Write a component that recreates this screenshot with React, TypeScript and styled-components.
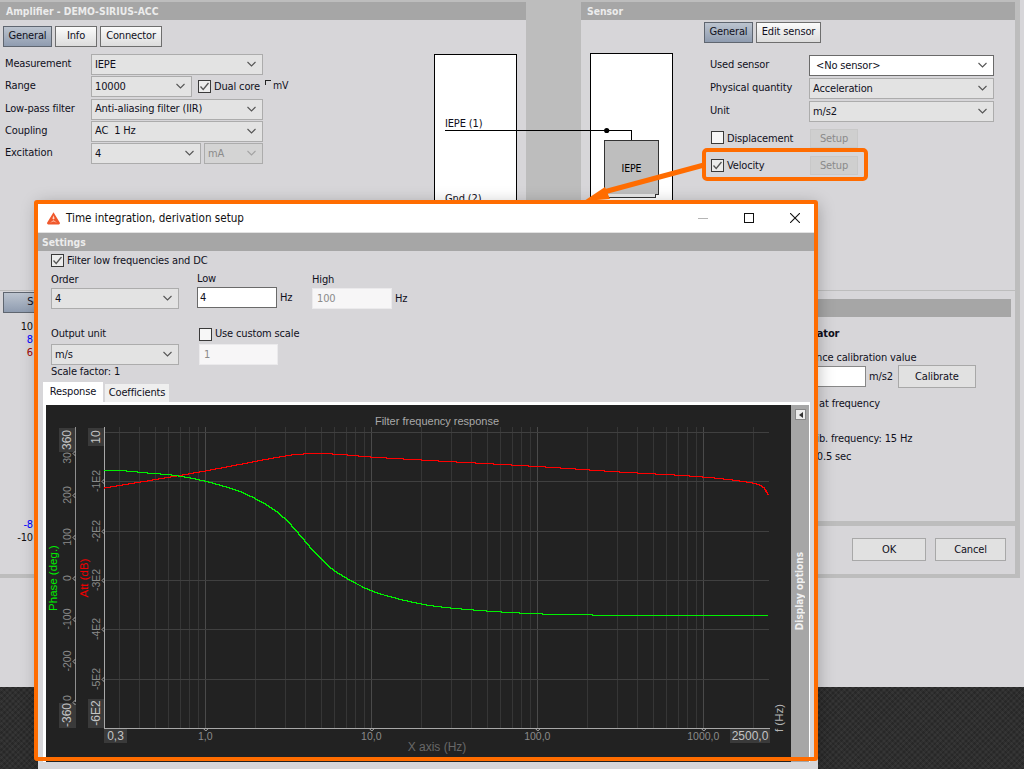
import React from "react";
import styled, { createGlobalStyle } from "styled-components";

const Global = createGlobalStyle`
  html, body { margin: 0; padding: 0; background: #d7d6d9; overflow: hidden; }
  * { box-sizing: border-box; }
`;

const UI = `"DejaVu Sans Condensed", "DejaVu Sans", sans-serif`;
const ORANGE = "#ff6c00";
const PANEL = "#d7d6d9";

const Page = styled.div`
  position: relative; width: 1024px; height: 769px; overflow: hidden;
  background: ${PANEL}; font: 11px ${UI}; letter-spacing: -0.15px; color: #10101c;
`;
const ParentWindow = styled.div`
  width: 1020px; height: 578px; padding-top: 2px; background: #bdbdbd; isolation: isolate;
  display: flex; flex-direction: column; gap: 1px; position: relative;
`;
const TopRow = styled.div`display: flex; height: 288px; gap: 55px;`;
const Panel = styled.section<{ $w: number }>`
  width: ${(p) => p.$w}px; background: ${PANEL}; display: flex; flex-direction: column;
`;
const PanelHeader = styled.div`
  height: 18px; background: #a6a6a6; color: #ececec; font-weight: 700; font-size: 10.3px; letter-spacing: 0;
  line-height: 18px; padding-left: 6px; flex: none;
`;
const PanelBody = styled.div`display: flex; flex: 1; min-height: 0;`;
const FormColumn = styled.div<{ $w: number; $pad: number }>`
  width: ${(p) => p.$w}px; padding-left: ${(p) => p.$pad}px; flex: none;
`;
const TabBar = styled.div<{ $top: number }>`
  display: flex; gap: 3px; margin-top: ${(p) => p.$top}px; height: 21px;
`;
const Button = styled.div<{ $w: number; $active?: boolean }>`
  width: ${(p) => p.$w}px; height: 21px; display: flex; align-items: center; justify-content: center;
  border: 1px solid ${(p) => (p.$active ? "#5f6670" : "#6e6e6e")};
  background: ${(p) => (p.$active ? "linear-gradient(#bcc4cf, #8f9cb0)" : "linear-gradient(#fbfbfb, #dcdcdc)")};
  padding-bottom: 3px; flex: none;
`;
const Rows = styled.div<{ $top: number; $gap: number }>`
  margin-top: ${(p) => p.$top}px; display: flex; flex-direction: column; gap: ${(p) => p.$gap}px;
`;
const Row = styled.div`display: flex; align-items: center; height: 21px;`;
const RowLabel = styled.span<{ $w: number; $pad?: number }>`
  width: ${(p) => p.$w}px; flex: none; padding-bottom: 2px; padding-left: ${(p) => p.$pad ?? 0}px;
`;
const SelectBox = styled.div<{ $w: number; $white?: boolean; $off?: boolean }>`
  width: ${(p) => p.$w}px; height: 21px; flex: none; display: flex; align-items: center;
  justify-content: space-between; padding: 0 6px 1px ${(p) => (p.$white ? 6 : 3)}px;
  border: 1px solid ${(p) => (p.$white ? "#6a6a6a" : "#acacac")};
  background: ${(p) => (p.$white ? "#fff" : p.$off ? "#d4d4d4" : "#e3e3e3")};
  color: ${(p) => (p.$off ? "#8b8b8b" : "inherit")};
  white-space: pre;
`;
const Chevron = ({ off }: { off?: boolean }) => (
  <svg width="9" height="6" viewBox="0 0 9 6" fill="none" stroke={off ? "#a3a3a3" : "#555"} strokeWidth="1.1">
    <path d="M.5 1 L4.5 5 L8.5 1" />
  </svg>
);
const Select = ({ value, w, white, off }: { value: string; w: number; white?: boolean; off?: boolean }) => (
  <SelectBox $w={w} $white={white} $off={off}>
    <span>{value}</span>
    <Chevron off={off} />
  </SelectBox>
);
const CheckBox = styled.span<{ $on?: boolean }>`
  width: 13px; height: 13px; border: 1px solid #3a3a3a; flex: none; display: inline-flex;
  align-items: center; justify-content: center; background: ${(p) => (p.$on ? "#ececec" : "#f7f7f7")};
`;
const Check = ({ on }: { on?: boolean }) => (
  <CheckBox $on={on}>
    {on && (
      <svg width="11" height="11" viewBox="0 0 11 11" fill="none" stroke="#555" strokeWidth="1.3">
        <path d="M1.5 5.5 L4.2 8.5 L9.5 2" />
      </svg>
    )}
  </CheckBox>
);
const CheckLabel = styled.label`
  display: inline-flex; align-items: center; gap: 3px; white-space: nowrap;
`;
const DualCore = styled.div`margin-left: 6px; display: flex; align-items: center;`;
const UnitMark = styled.span`
  margin-left: 5px; display: inline-flex; gap: 2px; align-items: flex-start; padding-bottom: 3px; font-size: 10.5px;
  &::before { content: ""; width: 5px; height: 4px; border: 1px solid #222; border-right: 0; border-bottom: 0; margin-top: 1px; }
`;
const SchematicBox = styled.div<{ $left: number; $top: number }>`
  width: 83px; height: 260px; margin-left: ${(p) => p.$left}px; margin-top: ${(p) => p.$top}px;
  background: #fff; border: 1px solid #000; flex: none; position: relative;
`;
const PortLabel = styled.div<{ $top: number }>`
  padding-left: 10px; margin-top: ${(p) => p.$top}px; height: 14px; line-height: 14px; white-space: nowrap;
`;
const SensorCard = styled.div`
  width: 55px; height: 55px; margin: 86px 0 0 13px; background: #bebebe; border: 1px solid #333;
  color: #000; font-size: 10.5px; display: flex; align-items: center; justify-content: center;
  position: relative; z-index: 1;
  &::after {
    content: ""; position: absolute; left: 2px; right: 2px; bottom: -4px; height: 3px; background: #e8e8e8;
    border: 1px solid #333; border-top: 0;
  }
`;
const Wire = styled.svg`position: absolute; left: 0; top: 0; width: 700px; height: 150px; pointer-events: none; z-index: 2;`;
const SensorForm = styled.div`margin-left: 31px;`;
const SensorRows = styled.div`margin: 12px 0 0 6px;`;
const OptionRows = styled.div`margin-top: 7px; display: flex; flex-direction: column; gap: 8px;`;
const OptionRow = styled.div`display: flex; align-items: center; height: 19px;`;
const OptionCheck = styled.div`width: 100px; padding: 1px 0 0 1px; flex: none; & > label > span:last-child { padding-top: 1px; }`;
const SetupButton = styled.div`
  width: 48px; height: 19px; background: #cfcfcf; color: #8a8a8a; border: 1px solid #c8c8c8;
  display: flex; align-items: center; justify-content: center; padding-bottom: 1px;
`;
const BottomRow = styled.div`display: flex; height: 283px; padding-right: 5px;`;
const ScopePanel = styled.section`
  width: 640px; background: ${PANEL}; padding: 1px 0 0 3px; flex: none;
`;
const YScale = styled.div`
  width: 30px; margin-top: 7px; height: 225px; display: flex; flex-direction: column; text-align: right; font-size: 11px; line-height: 13px;
`;
const ScaleTick = styled.span<{ $c: string; $gap?: number }>`
  color: ${(p) => p.$c}; margin-top: ${(p) => p.$gap ?? 0}px;
`;
const RightStack = styled.div`
  flex: none; width: 375px; display: flex; flex-direction: column; gap: 5px; background: #bdbdbd;
`;
const CalibPanel = styled.section`
  height: 230px; background: ${PANEL}; padding: 8px 4px 0 0;
`;
const CalibHeader = styled.div`height: 18px; background: #a6a6a6;`;
const CalibBody = styled.div`padding-left: 145px; display: flex; flex-direction: column;`;
const BoldLine = styled.div`font-weight: 700; margin-top: 10px; height: 14px; line-height: 14px;`;
const CalibLine = styled.div<{ $top: number; $indent?: number }>`
  margin-top: ${(p) => p.$top}px; padding-left: ${(p) => p.$indent ?? 0}px; height: 14px; line-height: 14px; white-space: nowrap;
`;
const CalibInputRow = styled.div`display: flex; align-items: center; height: 23px; margin-top: 0;`;
const NumberInput = styled.div<{ $w: number; $dark?: boolean; $off?: boolean }>`
  width: ${(p) => p.$w}px; height: 21px; flex: none; display: flex; align-items: center;
  background: ${(p) => (p.$off ? "#f7f6f7" : "#fff")};
  border: 1px solid ${(p) => (p.$dark ? "#6a6a6a" : p.$off ? "#ebeaec" : "#888")};
  color: ${(p) => (p.$off ? "#8b8b8b" : "inherit")}; padding-left: ${(p) => (p.$off ? 4 : 2)}px;
`;
const UnitText = styled.span`margin-left: 3px;`;
const PlainButton = styled.div<{ $w: number }>`
  width: ${(p) => p.$w}px; height: 23px; background: #e1e1e1; border: 1px solid #a8a8a8;
  display: flex; align-items: center; justify-content: center; flex: none;
`;
const CalibGap = styled.span`width: 5px; flex: none;`;
const ButtonBar = styled.section`
  height: 48px; background: ${PANEL}; display: flex; justify-content: flex-end; gap: 9px; padding: 12px 9px 0 0;
`;
const Carbon = styled.div`
  margin-top: 109px; height: 82px;
  background-color: #2f2f2f;
  background-image:
    repeating-linear-gradient(45deg, rgba(255,255,255,.03) 0 2px, transparent 2px 4px),
    repeating-linear-gradient(-45deg, rgba(0,0,0,.16) 0 2px, transparent 2px 4px);
`;
const Dialog = styled.div`
  position: absolute; left: 38px; top: 204px; width: 780px; height: 565px; background: ${PANEL};
  box-shadow: 0 0 16px rgba(0,0,0,.28); display: flex; flex-direction: column; padding-right: 4px;
`;
const DialogFrame = styled.div`
  position: absolute; left: 34px; top: 200px; width: 784px; height: 561px;
  border: 4px solid ${ORANGE}; border-radius: 3px; pointer-events: none;
`;
const TitleBar = styled.div`
  height: 29px; background: #fff; display: flex; align-items: center; padding: 0 14px 0 9px; flex: none;
  border-bottom: 1px solid #e2e2e2; color: #111; font-size: 11.6px; letter-spacing: 0;
`;
const TitleText = styled.span`margin-left: 6px; flex: 1; padding-bottom: 1px;`;
const WinControls = styled.div`display: flex; gap: 36px; align-items: center;`;
const SettingsHeader = styled.div`
  height: 18px; background: #a6a6a6; color: #ececec; font-weight: 700; font-size: 10.3px; letter-spacing: 0;
  line-height: 18px; padding-left: 4px; flex: none;
`;
const SettingsBody = styled.div`padding: 3px 0 0 13px; height: 131px; flex: none;`;
const FilterRow = styled.div`height: 14px;`;
const FieldsRow = styled.div<{ $top: number }>`display: flex; margin-top: ${(p) => p.$top}px;`;
const FieldCol = styled.div<{ $w: number; $shift?: number }>`
  width: ${(p) => p.$w}px; flex: none; margin-top: ${(p) => p.$shift ?? 0}px;
`;
const FieldLabel = styled.div<{ $h: number }>`height: ${(p) => p.$h}px; line-height: 16px;`;
const InlineField = styled.div`display: flex; align-items: center;`;
const ScaleFactor = styled.div`height: 14px; line-height: 14px; margin-top: 0;`;
const TabStrip = styled.div`display: flex; align-items: flex-end; height: 20px; padding-left: 5px; gap: 2px; flex: none;`;
const PageTab = styled.div<{ $w: number; $active?: boolean }>`
  width: ${(p) => p.$w}px; height: ${(p) => (p.$active ? 20 : 18)}px;
  background: ${(p) => (p.$active ? "#fff" : "#efefef")};
  display: flex; align-items: center; justify-content: center; padding-bottom: 1px;
`;
const TabPane = styled.div`
  margin-left: 5px; width: 767px; flex: none; border-top: 3px solid #fff; border-left: 3px solid #fff; border-right: 1px solid #fff;
  background: #222; display: flex; height: 360px;
`;
const ChartSvg = styled.svg`display: block; width: 745px; height: 357px; flex: none; background: #222; letter-spacing: 0;`;
const SideStrip = styled.div`
  width: 18px; flex: none; background: #a6a6a6; position: relative; display: flex; flex-direction: column; align-items: center;
`;
const CollapseButton = styled.div`
  position: absolute; top: 4px; left: 4px; width: 11px; height: 11px; background: #ededed; border: 1px solid #888;
  display: flex; align-items: center; justify-content: center;
  &::before { content: ""; border: 3px solid transparent; border-right: 4px solid #333; border-left: 0; }
`;
const StripText = styled.span`
  position: absolute; top: 147px; left: 3px; writing-mode: vertical-rl; transform: rotate(180deg);
  color: #f0f0f0; font-weight: 700; font-size: 10px; letter-spacing: 0; white-space: nowrap;
`;
const Annotation = styled.div`
  position: absolute; left: 702px; top: 148px; width: 166px; height: 33px; border: 4px solid ${ORANGE}; border-radius: 5px; pointer-events: none;
`;
const ArrowLayer = styled.svg`position: absolute; left: 570px; top: 150px; width: 150px; height: 60px; pointer-events: none;`;

const xf = (f: number) => 205.3 + 166 * Math.log10(f);
const curve = (pts: number[][]) => {
  const slope = (i: number) => {
    const a = pts[Math.max(i - 1, 0)], b = pts[Math.min(i + 1, pts.length - 1)];
    return (b[1] - a[1]) / (b[0] - a[0]);
  };
  const out: string[] = [];
  for (let i = 0; i < pts.length - 1; i++) {
    const [x0, y0] = pts[i], [x1, y1] = pts[i + 1];
    const h = x1 - x0, m0 = slope(i) * h, m1 = slope(i + 1) * h;
    const n = Math.max(1, Math.round(h));
    for (let s = 0; s < n; s++) {
      const t = s / n, t2 = t * t, t3 = t2 * t;
      const y = (2 * t3 - 3 * t2 + 1) * y0 + (t3 - 2 * t2 + t) * m0 + (-2 * t3 + 3 * t2) * y1 + (t3 - t2) * m1;
      out.push(`${(x0 + h * t).toFixed(1)},${Math.round(y) + 0.5}`);
    }
  }
  const l = pts[pts.length - 1];
  out.push(`${l[0]},${l[1]}`);
  return out.join(" ");
};
const RED = [[104, 487.5], [150, 480], [205, 470.5], [250, 462], [285, 455.5], [303, 453.5], [333, 453.5], [371, 456.5], [430, 460], [537, 466], [620, 471.5], [703, 476.5], [753, 482.5], [763, 486.5], [766.7, 491.5], [768.5, 495.5]];
const GREEN = [[104, 469.5], [120, 470], [150, 472.7], [175, 475], [205, 480.7], [236.7, 490], [253, 497], [270, 506.5], [283, 516.5], [296.7, 531], [313, 550], [330, 566.7], [346.7, 578], [371.3, 590], [396.7, 598], [430, 605], [480, 610], [537, 613.3], [580, 614.3], [640, 615], [768, 615.5]];
const H_GRID = [432.5, 481.5, 531.5, 580.5, 629.5, 679.5];
const V_GRID = [0.3, 0.4, 0.5, 0.6, 0.7, 0.8, 0.9, 1, 2, 3, 4, 5, 6, 7, 8, 9, 10, 20, 30, 40, 50, 60, 70, 80, 90, 100, 200, 300, 400, 500, 600, 700, 800, 900, 1000, 2000];
const PHASE = [["200", 495], ["100", 537], ["0", 578], ["-100", 619], ["-200", 661]] as [string, number][];
const ATT = [["-1E2", 481], ["-2E2", 531], ["-3E2", 580], ["-4E2", 629], ["-5E2", 679]] as [string, number][];
const XT = [["1,0", 1], ["10,0", 10], ["100,0", 100], ["1000,0", 1000]] as [string, number][];

const Vert = ({ x, y, fill, size = 11, children }: { x: number; y: number; fill: string; size?: number; children: string }) => (
  <text x={x} y={y} fill={fill} fontSize={size} textAnchor="middle" dominantBaseline="central" transform={`rotate(-90 ${x} ${y})`}>{children}</text>
);

const Chart = () => (
  <ChartSvg viewBox="46 405 745 357" fontFamily={'"Liberation Sans", Arial, sans-serif'}>
    <g shapeRendering="crispEdges" fill="none">
      {V_GRID.map((f) => {
        const major = [1, 10, 100, 1000].includes(f);
        return <line key={f} x1={Math.round(xf(f)) + 0.5} x2={Math.round(xf(f)) + 0.5} y1={427} y2={728} stroke={major ? "#4a4a4a" : "#363636"} />;
      })}
      {H_GRID.map((y) => <line key={y} x1={104} x2={769} y1={y} y2={y} stroke="#404040" />)}
      <rect x={59} y={428} width={17} height={24} fill="#3a3a3a" />
      <rect x={59} y={703} width={17} height={25} fill="#3a3a3a" />
      <rect x={88} y={428} width={16} height={18} fill="#3a3a3a" />
      <rect x={88} y={699} width={16} height={29} fill="#3a3a3a" />
      <rect x={104} y={729} width={23} height={14} fill="#3a3a3a" />
      <rect x={730} y={729} width={40} height={14} fill="#3a3a3a" />
      <line x1={104.5} x2={104.5} y1={427} y2={728} stroke="#a8a8a8" />
      <line x1={75.5} x2={75.5} y1={427} y2={702} stroke="#8f8f8f" />
      <line x1={104} x2={770} y1={728.5} y2={728.5} stroke="#a8a8a8" />
    </g>
    <g fill="none" stroke="#a8a8a8">
      {ATT.map(([l, y]) => <path key={l} d={`M104.5 ${y - 2}L102 ${y + 0.5}L104.5 ${y + 3}`} />)}
      {[453, 495, 537, 578, 619, 661, 702].map((y) => <path key={y} d={`M75.5 ${y - 2}L73 ${y + 0.5}L75.5 ${y + 3}`} />)}
      {XT.map(([l, f]) => <path key={l} d={`M${xf(f) - 2} 728.5L${xf(f) + 0.5} 731L${xf(f) + 3} 728.5`} />)}
    </g>
    <polyline points={curve(RED)} fill="none" stroke="#ff0000" strokeWidth="1.4" shapeRendering="crispEdges" />
    <polyline points={curve(GREEN)} fill="none" stroke="#00f000" strokeWidth="1.4" shapeRendering="crispEdges" />
    <text x={437} y={421} fill="#a9a9a9" fontSize={11} textAnchor="middle" dominantBaseline="central">Filter frequency response</text>
    <text x={437} y={747} fill="#686868" fontSize={12} textAnchor="middle" dominantBaseline="central">X axis (Hz)</text>
    <Vert x={67} y={440} fill="#c4c4c4" size={12}>360</Vert>
    <Vert x={67} y={715} fill="#c4c4c4" size={12}>-360</Vert>
    <Vert x={96} y={437} fill="#c4c4c4" size={12}>10</Vert>
    <Vert x={96} y={713} fill="#c4c4c4" size={12}>-6E2</Vert>
    <Vert x={67} y={458} fill="#8a8a8a" size={10.5}>30</Vert>
    <Vert x={67} y={698} fill="#8a8a8a" size={10.5}>0</Vert>
    {PHASE.map(([l, y]) => <Vert key={l} x={67} y={y} fill="#8a8a8a" size={10.5}>{l}</Vert>)}
    {ATT.map(([l, y]) => <Vert key={l} x={96} y={y} fill="#8a8a8a" size={10.5}>{l}</Vert>)}
    <Vert x={53} y={578} fill="#00ee00" size={11.5}>Phase (deg.)</Vert>
    <Vert x={84} y={578} fill="#f00000" size={11.5}>Att (dB)</Vert>
    <text x={115.5} y={736} fill="#c4c4c4" fontSize={12} textAnchor="middle" dominantBaseline="central">0,3</text>
    <text x={750} y={736} fill="#c4c4c4" fontSize={12} textAnchor="middle" dominantBaseline="central">2500,0</text>
    {XT.map(([l, f]) => <text key={l} x={xf(f)} y={735.5} fill="#8a8a8a" fontSize={10.5} textAnchor="middle" dominantBaseline="central">{l}</text>)}
    <Vert x={779} y={718} fill="#b4b4b4" size={11.5}>f (Hz)</Vert>
  </ChartSvg>
);

const Logo = () => (
  <svg width="13" height="13" viewBox="0 0 13 13">
    <path d="M6.5 .3 L12.9 10.8 Q13.2 12.6 11.5 12.4 L1.5 12.4 Q-.2 12.6 .1 10.8 Z" fill="#f0582c" />
    <path d="M6.5 3.4 L7.6 6.6 L6.5 7.6 L5.4 6.6 Z" fill="#ffd9c9" />
    <path d="M3 10.8 L6.5 8 L10 10.8 L6.5 9.6 Z" fill="#ffb79c" />
  </svg>
);

const WinIcon = ({ kind }: { kind: "min" | "max" | "close" }) => (
  <svg width="10" height="10" viewBox="0 0 10 10" fill="none" stroke={kind === "min" ? "#b5b5b5" : "#111"} strokeWidth="1.1" shapeRendering={kind === "close" ? undefined : "crispEdges"}>
    {kind === "min" && <path d="M0 5.5H10" />}
    {kind === "max" && <rect x=".5" y=".5" width="9" height="9" />}
    {kind === "close" && <path d="M0 0L10 10M10 0L0 10" />}
  </svg>
);

const MaBox = styled.div`margin-left: 3px;`;

export default function App() {
  return (
    <Page>
      <Global />
      <ParentWindow>
        <TopRow>
          <Panel $w={526}>
            <PanelHeader>Amplifier - DEMO-SIRIUS-ACC</PanelHeader>
            <PanelBody>
              <FormColumn $w={434} $pad={3}>
                <TabBar $top={6}>
                  <Button $w={49} $active>General</Button>
                  <Button $w={42}>Info</Button>
                  <Button $w={62}>Connector</Button>
                </TabBar>
                <Rows $top={7} $gap={1.3}>
                  <Row><RowLabel $w={88} $pad={2}>Measurement</RowLabel><Select value="IEPE" w={172} /></Row>
                  <Row>
                    <RowLabel $w={88} $pad={2}>Range</RowLabel><Select value="10000" w={101} />
                    <DualCore><CheckLabel><Check on /><span>Dual core</span></CheckLabel><UnitMark>mV</UnitMark></DualCore>
                  </Row>
                  <Row><RowLabel $w={88} $pad={2}>Low-pass filter</RowLabel><Select value="Anti-aliasing filter (IIR)" w={172} /></Row>
                  <Row><RowLabel $w={88} $pad={2}>Coupling</RowLabel><Select value="AC  1 Hz" w={172} /></Row>
                  <Row><RowLabel $w={88} $pad={2}>Excitation</RowLabel><Select value="4" w={110} /><MaBox><Select value="mA" w={59} off /></MaBox></Row>
                </Rows>
              </FormColumn>
              <SchematicBox $left={0} $top={34}>
                <PortLabel $top={62}>IEPE (1)</PortLabel>
                <PortLabel $top={61}>Gnd (2)</PortLabel>
              </SchematicBox>
            </PanelBody>
          </Panel>
          <Panel $w={434}>
            <PanelHeader>Sensor</PanelHeader>
            <PanelBody>
              <SchematicBox $left={9} $top={33}>
                <SensorCard>IEPE</SensorCard>
              </SchematicBox>
              <SensorForm>
                <TabBar $top={2}>
                  <Button $w={49} $active>General</Button>
                  <Button $w={65}>Edit sensor</Button>
                </TabBar>
                <SensorRows>
                  <Rows $top={0} $gap={2}>
                    <Row><RowLabel $w={99}>Used sensor</RowLabel><Select value="<No sensor>" w={185} white /></Row>
                    <Row><RowLabel $w={99}>Physical quantity</RowLabel><Select value="Acceleration" w={185} /></Row>
                    <Row><RowLabel $w={99}>Unit</RowLabel><Select value="m/s2" w={185} /></Row>
                  </Rows>
                  <OptionRows>
                    <OptionRow><OptionCheck><CheckLabel><Check /><span>Displacement</span></CheckLabel></OptionCheck><SetupButton>Setup</SetupButton></OptionRow>
                    <OptionRow><OptionCheck><CheckLabel><Check on /><span>Velocity</span></CheckLabel></OptionCheck><SetupButton>Setup</SetupButton></OptionRow>
                  </OptionRows>
                </SensorRows>
              </SensorForm>
            </PanelBody>
          </Panel>
        </TopRow>
        <BottomRow>
          <ScopePanel>
            <Button $w={78} $active>Scope</Button>
            <YScale>
              <ScaleTick $c="#111">10</ScaleTick>
              <ScaleTick $c="#0000ff">8</ScaleTick>
              <ScaleTick $c="#a00000">6</ScaleTick>
              <ScaleTick $c="#0000ff" $gap={159}>-8</ScaleTick>
              <ScaleTick $c="#111">-10</ScaleTick>
            </YScale>
          </ScopePanel>
          <RightStack>
            <CalibPanel>
              <CalibHeader />
              <CalibBody>
                <BoldLine>Calibrator</BoldLine>
                <CalibLine $top={10}>Reference calibration value</CalibLine>
                <CalibInputRow>
                  <NumberInput $w={81} />
                  <UnitText>m/s2</UnitText>
                  <CalibGap />
                  <PlainButton $w={78}>Calibrate</PlainButton>
                </CalibInputRow>
                <CalibLine $top={9} $indent={7}>Calib at frequency</CalibLine>
                <CalibLine $top={21} $indent={16}>Calib. frequency: 15 Hz</CalibLine>
                <CalibLine $top={4} $indent={2}>Time: 0.5 sec</CalibLine>
              </CalibBody>
            </CalibPanel>
            <ButtonBar>
              <PlainButton $w={74}>OK</PlainButton>
              <PlainButton $w={71}>Cancel</PlainButton>
            </ButtonBar>
          </RightStack>
        </BottomRow>
        <Wire viewBox="0 0 700 150">
          <g fill="none" stroke="#000" shapeRendering="crispEdges">
            <path d="M445 130.5H631.5V140" />
          </g>
          <circle cx="606.7" cy="130.5" r="2.6" fill="#000" />
        </Wire>
      </ParentWindow>
      <Carbon />
      <Dialog>
        <TitleBar>
          <Logo />
          <TitleText>Time integration, derivation setup</TitleText>
          <WinControls>
            <WinIcon kind="min" />
            <WinIcon kind="max" />
            <WinIcon kind="close" />
          </WinControls>
        </TitleBar>
        <SettingsHeader>Settings</SettingsHeader>
        <SettingsBody>
          <FilterRow><CheckLabel><Check on /><span>Filter low frequencies and DC</span></CheckLabel></FilterRow>
          <FieldsRow $top={4}>
            <FieldCol $w={146}>
              <FieldLabel $h={16}>Order</FieldLabel>
              <Select value="4" w={128} />
            </FieldCol>
            <FieldCol $w={115} $shift={-1}>
              <FieldLabel $h={16}>Low</FieldLabel>
              <InlineField><NumberInput $w={80} $dark>4</NumberInput><UnitText>Hz</UnitText></InlineField>
            </FieldCol>
            <FieldCol $w={100}>
              <FieldLabel $h={16}>High</FieldLabel>
              <InlineField><NumberInput $w={80} $off>100</NumberInput><UnitText>Hz</UnitText></InlineField>
            </FieldCol>
          </FieldsRow>
          <FieldsRow $top={17}>
            <FieldCol $w={148}>
              <FieldLabel $h={18}>Output unit</FieldLabel>
              <Select value="m/s" w={128} />
            </FieldCol>
            <FieldCol $w={120}>
              <FieldLabel $h={18}><CheckLabel><Check /><span>Use custom scale</span></CheckLabel></FieldLabel>
              <NumberInput $w={79} $off>1</NumberInput>
            </FieldCol>
          </FieldsRow>
          <ScaleFactor>Scale factor: 1</ScaleFactor>
        </SettingsBody>
        <TabStrip>
          <PageTab $w={60} $active>Response</PageTab>
          <PageTab $w={64}>Coefficients</PageTab>
        </TabStrip>
        <TabPane>
          <Chart />
          <SideStrip>
            <CollapseButton />
            <StripText>Display options</StripText>
          </SideStrip>
        </TabPane>
      </Dialog>
      <DialogFrame />
      <Annotation />
      <ArrowLayer viewBox="570 150 150 60">
        <path d="M704 165 L602 192.5" stroke={ORANGE} strokeWidth="5" fill="none" />
        <path d="M584 201 L605 187 L610 199 Z" fill={ORANGE} />
      </ArrowLayer>
    </Page>
  );
}
